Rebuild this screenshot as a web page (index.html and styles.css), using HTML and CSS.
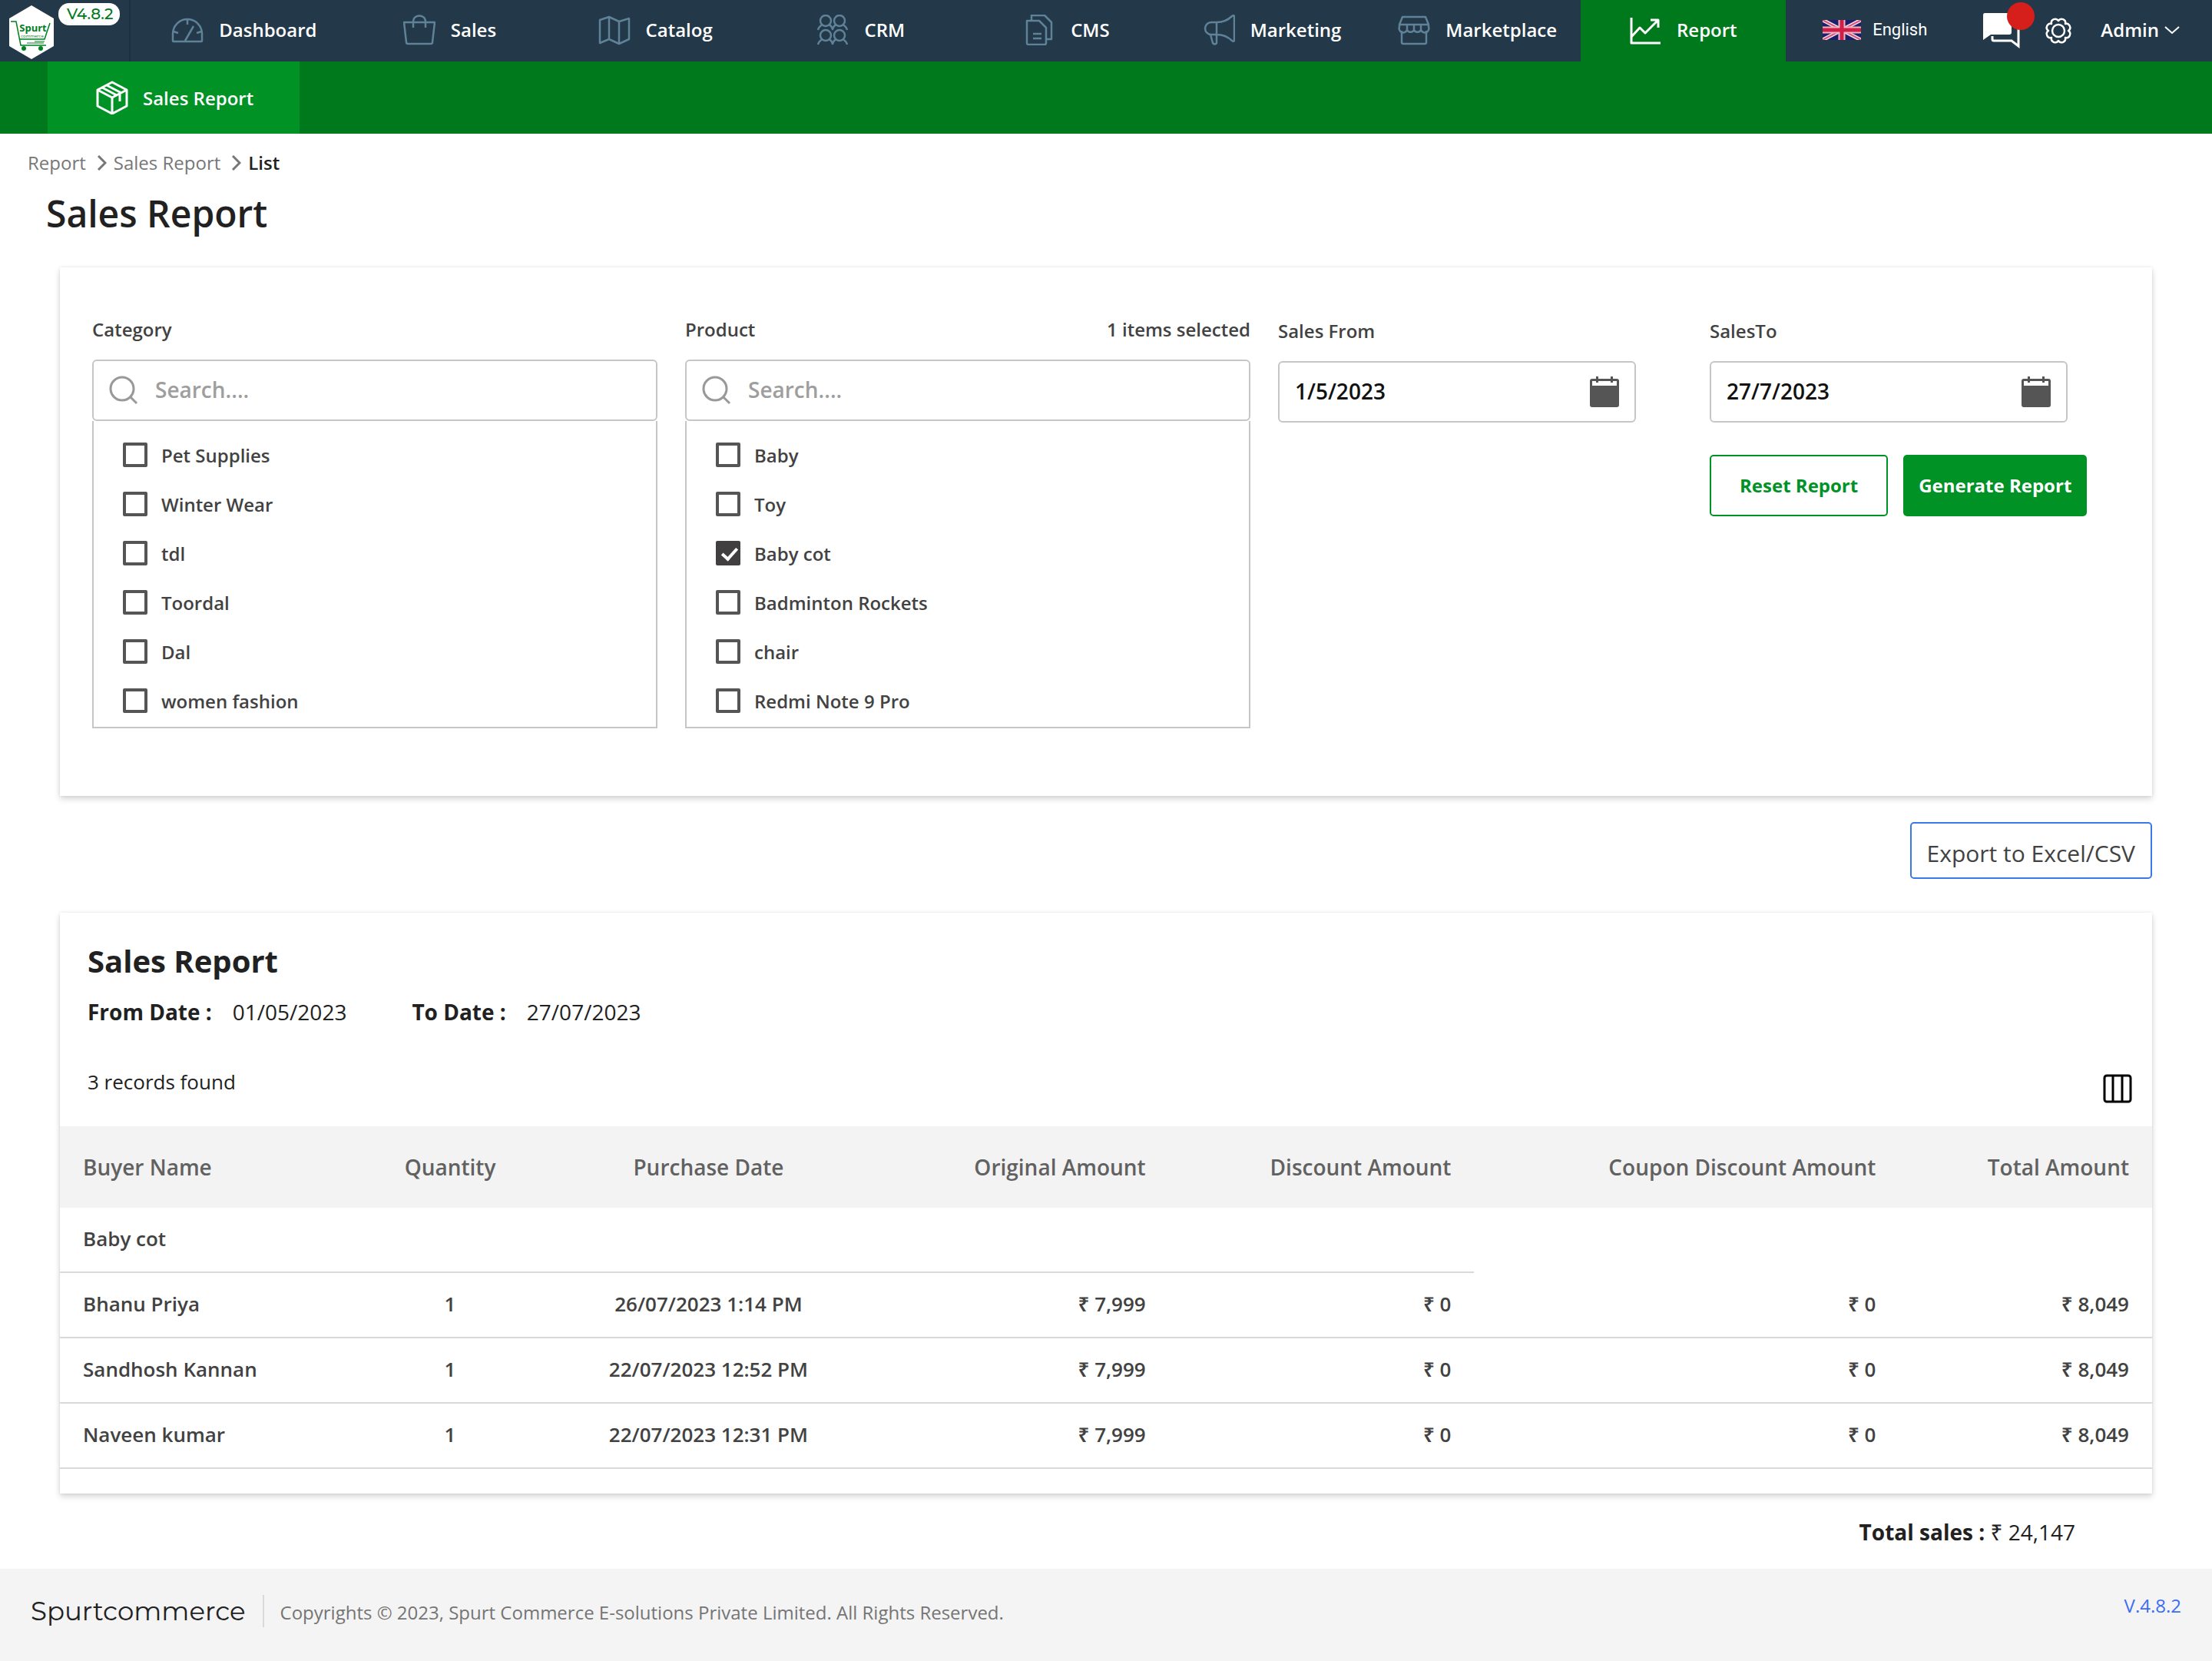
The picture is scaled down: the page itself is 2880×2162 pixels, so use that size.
FILE: index.html
```html
<!DOCTYPE html>
<html lang="en">
<head>
    <meta charset="utf-8">
    <title>Sales Report</title>
    <link rel="stylesheet" href="styles.css">
</head>
<body>
    <header class="topbar">
        <a href="#" class="brand" aria-label="Spurtcommerce">
            <svg class="logo" viewBox="0 0 60 70">
                <path d="M30 0 59 17v36L30 70 1 53V17z" fill="#fff"/>
                <text x="32" y="34" text-anchor="middle" font-size="13" font-weight="700" fill="#00801f">Spurt</text>
                <text x="31" y="42" text-anchor="middle" font-size="6" fill="#00801f">commerce</text>
                <g fill="none" stroke="#00801f" stroke-width="1.5">
                    <path d="M3 21h7l6 31h33M54 23l-7 21H14"/>
                    <path d="M34 47h13M24 49h22" stroke-width="1"/>
                </g>
                <circle cx="20" cy="56" r="3" fill="#00801f"/>
                <circle cx="42" cy="56" r="3" fill="#00801f"/>
            </svg>
            <span class="version">V4.8.2</span>
        </a>
        <nav class="menu">
            <a href="#">
                <svg class="icon" viewBox="0 0 42 40"><path d="M2 34v-9a19 19 0 0 1 38 0v9a1 1 0 0 1-1 1H3a1 1 0 0 1-1-1zM21 6v7M3 22l6 2M39 22l-6 2M18 34 29 15"/></svg>
                Dashboard
            </a>
            <a href="#">
                <svg class="icon" viewBox="0 0 42 40"><path d="M1 10h40l-3 26q0 2-2 2H6q-2 0-2-2zM13 17V9c0-10 16-10 16 0v8"/></svg>
                Sales
            </a>
            <a href="#">
                <svg class="icon" viewBox="0 0 42 40"><path d="M2 7l12-4 13 6 13-4v27l-13 6-13-6-12 5zM14 3v29M27 9v29"/></svg>
                Catalog
            </a>
            <a href="#">
                <svg class="icon" viewBox="0 0 42 40"><circle cx="12" cy="8" r="7"/><circle cx="30" cy="8" r="7"/><circle cx="12" cy="27" r="7"/><circle cx="30" cy="27" r="7"/><path d="M2 20c1-5 4-6 6-7M16 13c3 1 4 3 5 6c1-3 2-5 5-6M34 13c2 1 5 2 6 7M2 39c1-5 4-6 6-7M16 32c3 1 4 3 5 6c1-3 2-5 5-6M34 32c2 1 5 2 6 7"/></svg>
                CRM
            </a>
            <a href="#">
                <svg class="icon" viewBox="0 0 42 40"><path d="M5 8h16l9 9v20q0 2-2 2H7q-2 0-2-2zM11 8V1h17l9 9v22h-7M13 25h11M13 31h11"/></svg>
                CMS
            </a>
            <a href="#">
                <svg class="icon" viewBox="0 0 42 40"><path d="M18 10h-7a8 8 0 0 0 0 16h7zM18 10c8 0 15-3 20-8q3-2 3 1v30q0 3-3 1c-5-5-12-8-20-8M10 26l3 11q3 3 5 0V26"/></svg>
                Marketing
            </a>
            <a href="#">
                <svg class="icon" viewBox="0 0 42 40"><path d="M6 3h30l4 10v3a5 5 0 0 1-10 4 5 5 0 0 1-9 0 5 5 0 0 1-9 0 5 5 0 0 1-10-4v-3zM2 13h38M12 13v7M21 13v7M30 13v7M5 21v15q0 2 2 2h28q2 0 2-2V21"/></svg>
                Marketplace
            </a>
            <a href="#" class="active">
                <svg class="icon" viewBox="0 0 42 40"><path d="M3 4v33h38M3 29l11-12 7 7L37 8M28 7h10v10"/></svg>
                Report
            </a>
        </nav>
        <div class="tools">
            <a href="#" class="language">
                <svg class="flag" viewBox="0 0 50 26">
                    <path fill="#1c1f6b" d="M0 0h50v26H0z"/>
                    <path stroke="#f3dfe8" stroke-width="5" d="M0 0l50 26M50 0 0 26"/>
                    <path stroke="#d9567a" stroke-width="2" d="M0 0l50 26M50 0 0 26"/>
                    <path stroke="#eeb4c6" stroke-width="9" d="M25 0v26M0 13h50"/>
                    <path stroke="#cf1f47" stroke-width="5" d="M25 0v26M0 13h50"/>
                </svg>
                English
            </a>
            <button type="button" class="tool chat" aria-label="Messages">
                <svg viewBox="0 0 50 46"><path d="M3 0h32q3 0 3 3v22q0 3-3 3H11L1 35V3q0-3 2-3z" fill="#fff"/><path d="M42 12h5v31l-9-7H15q-2 0-2-2v-4" fill="none" stroke="#fff" stroke-width="3"/></svg>
                <span class="dot"></span>
            </button>
            <button type="button" class="tool gear" aria-label="Settings">
                <svg viewBox="0 0 38 38" fill="none" stroke="#fff" stroke-width="2.5" stroke-linejoin="round"><path d="M32 19A5 5 0 0 1 28 28 5 5 0 0 1 19 32 5 5 0 0 1 10 28 5 5 0 0 1 6 19 5 5 0 0 1 10 10 5 5 0 0 1 19 6 5 5 0 0 1 28 10 5 5 0 0 1 32 19z"/><circle cx="19" cy="19" r="8"/></svg>
            </button>
            <button type="button" class="tool admin">
                Admin
                <svg viewBox="0 0 20 12" fill="none" stroke="#fff" stroke-width="2"><path d="M1 2l9 8 9-8"/></svg>
            </button>
        </div>
    </header>

    <nav class="subnav">
        <a href="#" class="subnav-tab">
            <svg viewBox="0 0 42 44" fill="none" stroke="#fff" stroke-width="3" stroke-linejoin="round"><path d="M21 2l19 10v21L21 43 2 33V12zM2 12l19 10 19-10M21 22v21M8 9l19 10M14 6l19 10M31 17v10"/></svg>
            Sales Report
        </a>
    </nav>

    <main>
        <nav class="breadcrumb" aria-label="Breadcrumb">
            <a href="#">Report</a>
            <svg viewBox="0 0 12 20"><path d="M1 1l9 9-9 9"/></svg>
            <a href="#">Sales Report</a>
            <svg viewBox="0 0 12 20"><path d="M1 1l9 9-9 9"/></svg>
            <span>List</span>
        </nav>
        <h1>Sales Report</h1>

        <form class="card filters">
            <div class="field">
                <div class="field-label"><label for="category">Category</label></div>
                <div class="search">
                    <svg viewBox="0 0 38 38"><circle cx="17" cy="17" r="15"/><path d="M28 28l8 8"/></svg>
                    <input type="text" id="category" placeholder="Search....">
                </div>
                <div class="options">
                    <label><input type="checkbox">Pet Supplies</label>
                    <label><input type="checkbox">Winter Wear</label>
                    <label><input type="checkbox">tdl</label>
                    <label><input type="checkbox">Toordal</label>
                    <label><input type="checkbox">Dal</label>
                    <label><input type="checkbox">women fashion</label>
                </div>
            </div>
            <div class="field">
                <div class="field-label"><label for="product">Product</label><span>1 items selected</span></div>
                <div class="search">
                    <svg viewBox="0 0 38 38"><circle cx="17" cy="17" r="15"/><path d="M28 28l8 8"/></svg>
                    <input type="text" id="product" placeholder="Search....">
                </div>
                <div class="options">
                    <label><input type="checkbox">Baby</label>
                    <label><input type="checkbox">Toy</label>
                    <label><input type="checkbox" checked>Baby cot</label>
                    <label><input type="checkbox">Badminton Rockets</label>
                    <label><input type="checkbox">chair</label>
                    <label><input type="checkbox">Redmi Note 9 Pro</label>
                </div>
            </div>
            <div class="field date-field">
                <div class="field-label"><label for="from">Sales From</label></div>
                <div class="date">
                    <input type="text" id="from" value="1/5/2023">
                    <button type="button" aria-label="Open calendar"><svg viewBox="0 0 38 40"><path fill="#555" fill-rule="evenodd" d="M8 0h3v3h16V0h3v3h5q3 0 3 3v31q0 3-3 3H3q-3 0-3-3V6q0-3 3-3h5zM3 6v6h32V6h-5v2h-3V6H11v2H8V6z"/></svg></button>
                </div>
            </div>
            <div class="field date-field">
                <div class="field-label"><label for="to">SalesTo</label></div>
                <div class="date">
                    <input type="text" id="to" value="27/7/2023">
                    <button type="button" aria-label="Open calendar"><svg viewBox="0 0 38 40"><path fill="#555" fill-rule="evenodd" d="M8 0h3v3h16V0h3v3h5q3 0 3 3v31q0 3-3 3H3q-3 0-3-3V6q0-3 3-3h5zM3 6v6h32V6h-5v2h-3V6H11v2H8V6z"/></svg></button>
                </div>
                <div class="actions">
                    <button type="reset" class="btn btn-reset">Reset Report</button>
                    <button type="submit" class="btn btn-generate">Generate Report</button>
                </div>
            </div>
        </form>

        <div class="export">
            <button type="button" class="btn-export">Export to Excel/CSV</button>
        </div>

        <section class="card report">
            <h2>Sales Report</h2>
            <p class="range">
                <b>From Date :</b><span>01/05/2023</span>
                <b>To Date :</b><span>27/07/2023</span>
            </p>
            <div class="records">
                <span>3 records found</span>
                <button type="button" aria-label="Columns"><svg viewBox="0 0 38 38" fill="none" stroke="#000" stroke-width="3"><rect x="2" y="2" width="34" height="34" rx="3"/><path d="M13 2v34M25 2v34"/></svg></button>
            </div>
            <table>
                <thead>
                    <tr>
                        <th class="name">Buyer Name</th>
                        <th class="qty">Quantity</th>
                        <th class="when">Purchase Date</th>
                        <th class="original">Original Amount</th>
                        <th class="discount">Discount Amount</th>
                        <th class="coupon">Coupon Discount Amount</th>
                        <th class="total">Total Amount</th>
                    </tr>
                </thead>
                <tbody>
                    <tr>
                        <td colspan="5">Baby cot</td>
                    </tr>
                    <tr>
                        <td>Bhanu Priya</td>
                        <td class="center">1</td>
                        <td class="center">26/07/2023 1:14 PM</td>
                        <td class="right">₹ 7,999</td>
                        <td class="right">₹ 0</td>
                        <td class="right">₹ 0</td>
                        <td class="right">₹ 8,049</td>
                    </tr>
                    <tr>
                        <td>Sandhosh Kannan</td>
                        <td class="center">1</td>
                        <td class="center">22/07/2023 12:52 PM</td>
                        <td class="right">₹ 7,999</td>
                        <td class="right">₹ 0</td>
                        <td class="right">₹ 0</td>
                        <td class="right">₹ 8,049</td>
                    </tr>
                    <tr>
                        <td>Naveen kumar</td>
                        <td class="center">1</td>
                        <td class="center">22/07/2023 12:31 PM</td>
                        <td class="right">₹ 7,999</td>
                        <td class="right">₹ 0</td>
                        <td class="right">₹ 0</td>
                        <td class="right">₹ 8,049</td>
                    </tr>
                </tbody>
            </table>
        </section>

        <p class="total-sales"><b>Total sales :</b> ₹ 24,147</p>
    </main>

    <footer>
        <span class="footer-brand">Spurtcommerce</span>
        <span class="copyright">Copyrights © 2023, Spurt Commerce E-solutions Private Limited. All Rights Reserved.</span>
        <a href="#">V.4.8.2</a>
    </footer>
</body>
</html>
```
FILE: styles.css
```css
* {
    box-sizing: border-box;
}
body {
    margin: 0;
    min-height: 100vh;
    display: flex;
    flex-direction: column;
    font-family: "Open Sans", "Noto Sans", sans-serif;
    font-size: 24px;
    color: #212121;
    background-color: #fff;
}
a {
    color: inherit;
    text-decoration: none;
}
button,
input {
    font-family: inherit;
    font-size: inherit;
    color: inherit;
}
button {
    cursor: pointer;
}
svg {
    display: block;
    flex-shrink: 0;
}

/* top bar */
.topbar {
    display: flex;
    height: 80px;
    background-color: #233848;
    color: #fff;
}
.brand {
    display: flex;
    align-items: flex-start;
    gap: 5px;
    width: 170px;
    margin-right: 14px;
    padding: 4px 0 0 11px;
    border-right: 2px solid #1d303f;
}
.logo {
    width: 60px;
    height: 70px;
    margin-top: 3px;
}
.version {
    padding: 0 8px 0 11px;
    border-radius: 14px;
    background-color: #fff;
    color: #00791c;
    font-family: Montserrat, sans-serif;
    font-size: 20px;
    font-weight: 500;
    line-height: 29px;
}
.menu {
    flex: 1;
    display: grid;
    grid-template-columns: repeat(8, 1fr);
    font-weight: 600;
}
.menu a {
    display: flex;
    align-items: center;
    justify-content: center;
    gap: 20px;
    padding-bottom: 3px;
}
.menu .active {
    background-color: #00791c;
}
.icon {
    width: 42px;
    height: 40px;
    fill: none;
    stroke: #5f8299;
    stroke-width: 2.5;
    stroke-linejoin: round;
}
.active .icon {
    stroke: #fff;
    stroke-width: 3;
}
.tools {
    display: flex;
    align-items: center;
    padding: 0 42px 0 48px;
}
.language {
    display: flex;
    align-items: center;
    gap: 15px;
    padding-bottom: 3px;
    font-family: Roboto, sans-serif;
    font-size: 22px;
    margin-right: 72px;
}
.flag {
    width: 50px;
    height: 26px;
}
.tool {
    display: flex;
    align-items: center;
    padding: 0;
    border: none;
    background: none;
    font-weight: 600;
}
.chat {
    position: relative;
    margin-right: 30px;
}
.chat svg {
    width: 50px;
    height: 46px;
}
.dot {
    position: absolute;
    top: -14px;
    right: -18px;
    width: 36px;
    height: 36px;
    border-radius: 50%;
    background-color: #d61f1a;
}
.gear {
    margin-right: 36px;
}
.gear svg {
    width: 38px;
    height: 38px;
}
.admin {
    gap: 7px;
    padding-bottom: 3px;
}
.admin svg {
    width: 20px;
    height: 12px;
}

/* green bar */
.subnav {
    display: flex;
    height: 94px;
    padding-left: 62px;
    background-color: #00791c;
}
.subnav-tab {
    display: flex;
    align-items: center;
    gap: 19px;
    padding: 0 60px 0 63px;
    background-color: #009225;
    color: #fff;
    font-weight: 600;
}
.subnav-tab svg {
    width: 42px;
    height: 44px;
}

/* content */
main {
    flex: 1;
    padding: 20px 78px 0;
}
.breadcrumb {
    display: flex;
    align-items: center;
    margin-left: -42px;
    line-height: 36px;
    color: #777;
}
.breadcrumb svg {
    width: 12px;
    height: 20px;
    margin: 0 9px 0 15px;
    fill: none;
    stroke: #777;
    stroke-width: 3;
}
.breadcrumb span {
    color: #212121;
    font-weight: 600;
}
h1 {
    margin: 14px 0 36px -18px;
    font-size: 48px;
    line-height: 68px;
    font-weight: 600;
}
.card {
    background-color: #fff;
    box-shadow: 0 4px 8px rgba(0, 0, 0, 0.16), 0 0 4px rgba(0, 0, 0, 0.08);
}
.filters {
    display: grid;
    grid-template-columns: 736fr 736fr 526fr 526fr;
    gap: 36px;
    padding: 64px 50px 88px 42px;
    color: #424242;
}
.field-label {
    display: flex;
    justify-content: space-between;
    height: 56px;
    line-height: 34px;
    font-weight: 600;
}
.search {
    display: flex;
    align-items: center;
    gap: 22px;
    height: 80px;
    padding: 0 20px;
    border: 2px solid #c6c6c6;
    border-radius: 6px;
}
.search svg {
    width: 38px;
    height: 38px;
    fill: none;
    stroke: #999;
    stroke-width: 3;
}
.search input {
    flex: 1;
    min-width: 0;
    padding: 0 0 2px;
    border: none;
    outline: none;
    font-size: 28px;
    font-weight: 600;
}
.search input::placeholder {
    color: #9e9e9e;
}
.options {
    padding: 12px 38px 2px;
    border: 2px solid #c6c6c6;
    border-top: none;
}
.options label {
    display: flex;
    align-items: center;
    gap: 18px;
    height: 64px;
    font-weight: 600;
}
.options input {
    appearance: none;
    width: 32px;
    height: 32px;
    margin: 0;
    border: 4px solid #555;
    border-radius: 2px;
}
.options input:checked {
    border-color: #423f40;
    background-color: #423f40;
}
.options input:checked::before {
    content: "";
    display: block;
    width: 8px;
    height: 16px;
    margin: 1px 8px;
    border: solid #fff;
    border-width: 0 4px 4px 0;
    transform: rotate(42deg);
}
.date-field {
    padding: 2px 60px 0 0;
}
.date {
    display: flex;
    align-items: center;
    height: 80px;
    padding: 0 20px;
    border: 2px solid #c6c6c6;
    border-radius: 6px;
}
.date input {
    flex: 1;
    min-width: 0;
    padding: 0 0 2px;
    border: none;
    outline: none;
    color: #111;
    font-size: 28px;
    font-weight: 600;
}
.date button {
    padding: 0;
    border: none;
    background: none;
}
.date svg {
    width: 38px;
    height: 40px;
}
.actions {
    display: flex;
    gap: 20px;
    margin: 42px -60px 0 0;
}
.btn {
    height: 80px;
    border: 2px solid #009225;
    border-radius: 5px;
    white-space: nowrap;
    font-weight: 700;
}
.btn-reset {
    padding: 0 37px 2px;
    background-color: #fff;
    color: #009225;
}
.btn-generate {
    padding: 0 18px 2px;
    background-color: #009225;
    color: #fff;
}
.export {
    display: flex;
    justify-content: flex-end;
    padding: 34px 0 44px;
}
.btn-export {
    height: 74px;
    padding: 6px 20px 0;
    border: 2px solid #3b78e7;
    border-radius: 5px;
    background-color: #fff;
    color: #424242;
    font-size: 30px;
}

/* report */
.report {
    padding: 36px 0 32px;
}
h2 {
    margin: 0 36px;
    font-size: 40px;
    line-height: 54px;
    font-weight: 700;
}
.range {
    display: flex;
    margin: 20px 36px 54px;
    font-size: 28px;
    line-height: 38px;
}
.range b {
    margin-right: 27px;
}
.range span {
    margin-right: 85px;
}
.records {
    display: flex;
    align-items: flex-end;
    justify-content: space-between;
    margin: 0 26px 30px 36px;
    line-height: 36px;
    font-size: 26px;
}
.records span {
    margin-bottom: 10px;
}
.records button {
    padding: 6px 0 0;
    border: none;
    background: none;
}
.records svg {
    width: 38px;
    height: 38px;
}
table {
    width: 100%;
    table-layout: fixed;
    border-spacing: 0;
}
th {
    height: 106px;
    padding: 0 30px;
    background-color: #f3f3f3;
    color: #616161;
    font-size: 28px;
    font-weight: 600;
    text-align: right;
}
td {
    height: 85px;
    padding: 0 30px 3px;
    border-bottom: 2px solid #d9d9d9;
    color: #424242;
    font-size: 26px;
    font-weight: 600;
}
.name {
    width: 14.3%;
    text-align: left;
}
.qty {
    width: 8.7%;
    text-align: center;
}
.when {
    width: 16%;
    text-align: center;
}
.original {
    width: 14%;
}
.discount {
    width: 14.6%;
}
.coupon {
    width: 20.3%;
}
.total {
    width: 12.1%;
}
.center {
    text-align: center;
}
.right {
    text-align: right;
}
.total-sales {
    margin: 30px 100px 28px;
    font-size: 28px;
    line-height: 40px;
    text-align: right;
}

/* footer */
footer {
    display: flex;
    align-items: flex-start;
    height: 120px;
    padding: 34px 40px 0;
    background-color: #f4f4f4;
    line-height: 42px;
    color: #757575;
}
.footer-brand {
    padding-right: 22px;
    border-right: 2px solid #d9d9d9;
    color: #212121;
    font-family: Montserrat, Inter, sans-serif;
    font-size: 34px;
}
.copyright {
    flex: 1;
    margin-left: 21px;
    line-height: 46px;
}
footer a {
    color: #3b6ef5;
    line-height: 28px;
}
```
